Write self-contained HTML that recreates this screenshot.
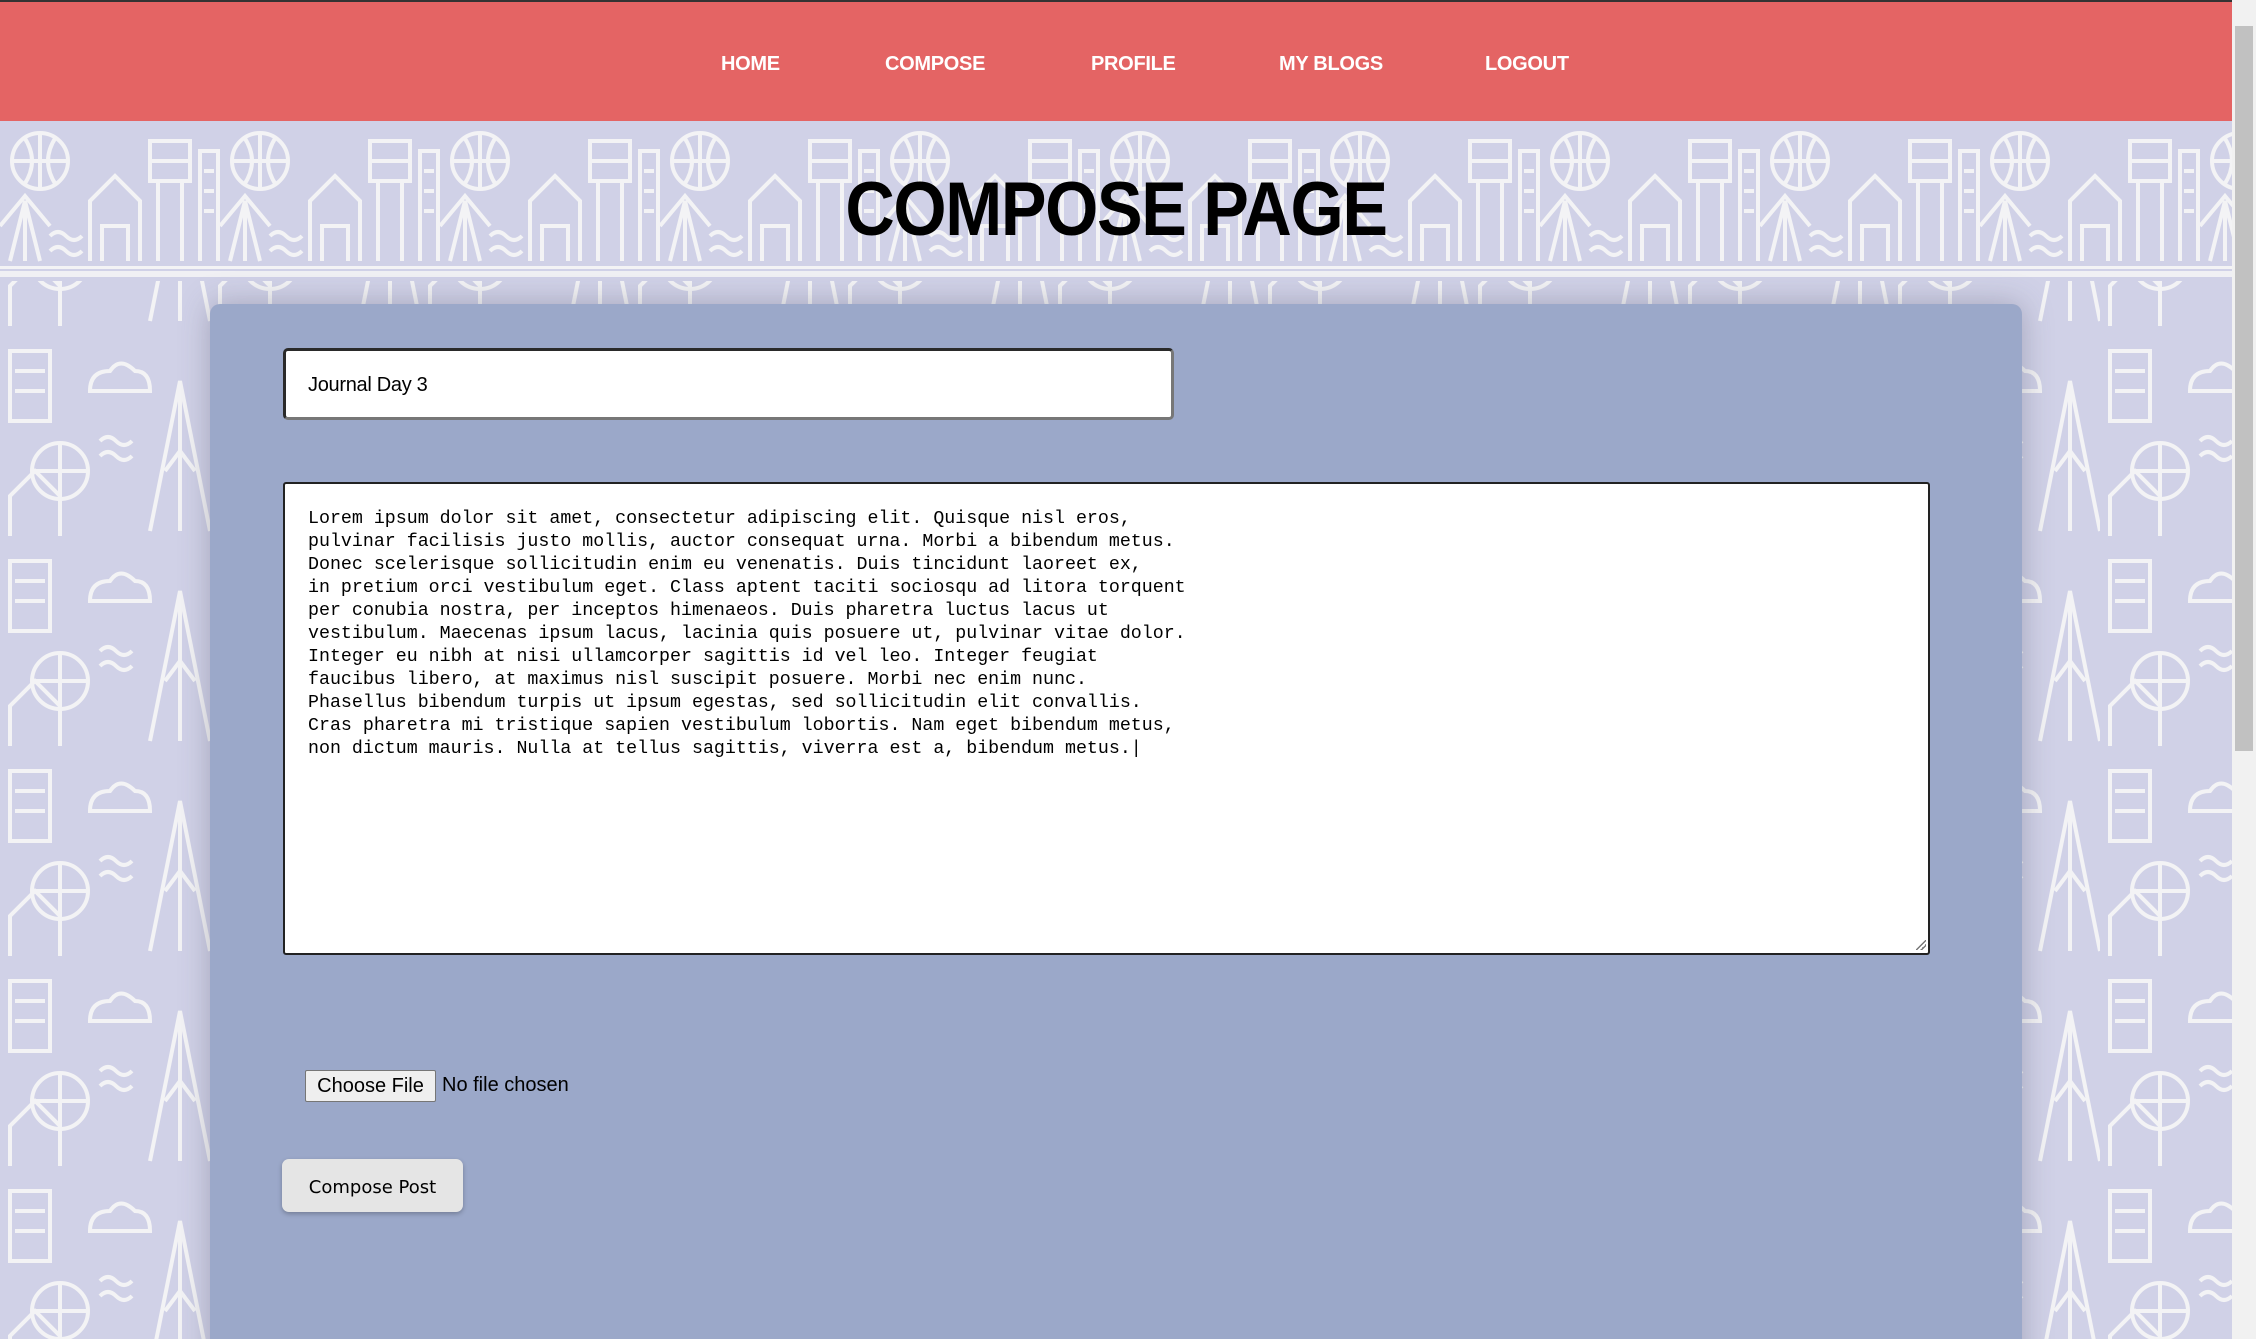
<!DOCTYPE html>
<html><head><meta charset="utf-8"><style>
*{box-sizing:border-box;margin:0;padding:0}
html,body{width:2256px;height:1339px;overflow:hidden}
body{background:#d0d1e7;font-family:"Liberation Sans",sans-serif;position:relative}
.bg{position:absolute;left:0;top:121px;width:2232px;height:1218px}
.nav{position:absolute;left:0;top:0;width:2232px;height:121px;background:#e46464;border-top:2px solid #333}
.nav a{position:absolute;top:51px;color:#fff;font-weight:bold;font-size:20px;text-decoration:none;letter-spacing:-0.3px}
h1{position:absolute;left:0;width:2232px;top:166px;text-align:center;font-size:76px;font-weight:bold;letter-spacing:-1.5px;color:#000;transform:scaleX(0.9)}
.card{position:absolute;left:210px;top:304px;width:1812px;height:1100px;background:#9ba8c9;border-radius:10px;box-shadow:0 0 30px rgba(80,80,100,0.35)}
.inp{position:absolute;left:283px;top:348px;width:891px;height:72px;background:#fff;border:3px solid #2a2a2a;border-bottom-color:#777;border-right-color:#777;border-radius:5px;font-size:20px;padding:23px 0 0 22px;letter-spacing:-0.3px}
.ta{position:absolute;left:283px;top:482px;width:1647px;height:473px;background:#fff;border:2px solid #222;border-radius:3px;font-family:"Liberation Mono",monospace;font-size:18.3px;line-height:23px;padding:24px 0 0 23px;white-space:pre;color:#000}
.rz{position:absolute;left:1916px;top:940px;width:10px;height:10px;background:linear-gradient(135deg,transparent 45%,#777 45%,#777 55%,transparent 55%,transparent 70%,#777 70%,#777 80%,transparent 80%)}
.fb{position:absolute;left:305px;top:1070px;width:131px;height:32px;background:#efefef;border:1px solid #767676;border-radius:2px;font-size:20px;text-align:center;line-height:30px}
.fn{position:absolute;left:442px;top:1070px;font-size:20px;line-height:30px}
.cp{position:absolute;left:282px;top:1159px;width:181px;height:53px;background:#e5e5e5;border-radius:7px;box-shadow:0 2px 5px rgba(0,0,0,0.25);font-family:"DejaVu Sans",sans-serif;font-size:18px;text-align:center;line-height:58px}
.sb{position:absolute;left:2232px;top:0;width:24px;height:1339px;background:#f1f1f1}
.th{position:absolute;left:2235px;top:26px;width:18px;height:725px;background:#c1c1c1}
</style></head><body>
<svg class="bg" width="2232" height="1218">
<defs>
<pattern id="p" x="0" y="0" width="220" height="150" patternUnits="userSpaceOnUse">
<g fill="none" stroke="#f3f3f5" stroke-width="4">
<circle cx="40" cy="40" r="28"/><path d="M12 40h56M40 12v56M24 16q16 24 0 48M56 16q-16 24 0 48"/>
<path d="M90 140v-60l25-25 25 25v60M102 140v-35h26v35"/>
<path d="M150 20h40v40h-40zM158 60v80M182 60v80M150 40h40"/>
<path d="M10 140l15-60 15 60M0 105l25-30 25 30M25 80v60"/>
<path d="M200 140v-110h18v110M204 50h10M204 70h10M204 90h10"/>
<path d="M50 130q8-8 16 0t16 0M50 115q8-8 16 0t16 0"/>
<path d="M0 147h220"/>
</g></pattern>
<pattern id="q" x="0" y="0" width="210" height="210" patternUnits="userSpaceOnUse">
<g fill="none" stroke="#f3f3f5" stroke-width="4">
<path d="M10 20h40v70h-40zM15 40h30M15 60h30"/>
<path d="M90 60q0-20 20-20q10-15 25 0q15 0 15 20z"/>
<path d="M150 200l30-150 30 150M165 140l15-20 15 20M180 50v150"/>
<circle cx="60" cy="140" r="28"/><path d="M32 140h56M60 112v56"/>
<path d="M10 205v-40l25-25 25 25v40"/>
<path d="M100 110q8-8 16 0t16 0M100 125q8-8 16 0t16 0"/>
</g></pattern>
</defs>
<rect x="0" y="0" width="2232" height="148" fill="url(#p)"/>
<rect x="0" y="150" width="2232" height="6" fill="#f0f0f4"/>
<rect x="0" y="160" width="2232" height="1058" fill="url(#q)"/>
</svg>
<div class="nav">
<a style="left:721px">HOME</a>
<a style="left:885px">COMPOSE</a>
<a style="left:1091px">PROFILE</a>
<a style="left:1279px">MY BLOGS</a>
<a style="left:1485px">LOGOUT</a>
</div>
<h1>COMPOSE PAGE</h1>
<div class="card"></div>
<div class="inp">Journal Day 3</div>
<div class="ta">Lorem ipsum dolor sit amet, consectetur adipiscing elit. Quisque nisl eros,
pulvinar facilisis justo mollis, auctor consequat urna. Morbi a bibendum metus.
Donec scelerisque sollicitudin enim eu venenatis. Duis tincidunt laoreet ex,
in pretium orci vestibulum eget. Class aptent taciti sociosqu ad litora torquent
per conubia nostra, per inceptos himenaeos. Duis pharetra luctus lacus ut
vestibulum. Maecenas ipsum lacus, lacinia quis posuere ut, pulvinar vitae dolor.
Integer eu nibh at nisi ullamcorper sagittis id vel leo. Integer feugiat
faucibus libero, at maximus nisl suscipit posuere. Morbi nec enim nunc.
Phasellus bibendum turpis ut ipsum egestas, sed sollicitudin elit convallis.
Cras pharetra mi tristique sapien vestibulum lobortis. Nam eget bibendum metus,
non dictum mauris. Nulla at tellus sagittis, viverra est a, bibendum metus.|</div>
<div class="rz"></div>
<div class="fb">Choose File</div>
<div class="fn">No file chosen</div>
<div class="cp">Compose Post</div>
<div class="sb"></div><div class="th"></div>
</body></html>
